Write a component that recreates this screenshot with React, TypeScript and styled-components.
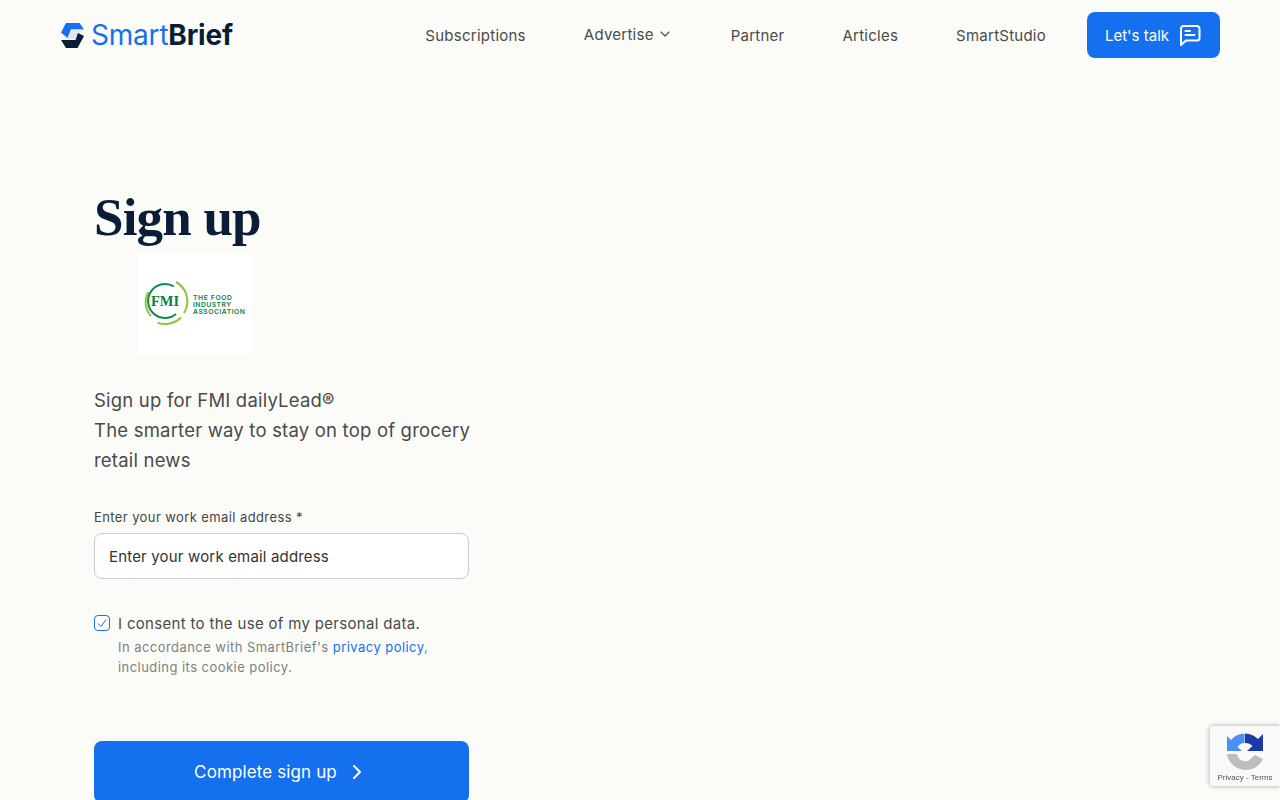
import styled, { createGlobalStyle } from "styled-components";
import { ChevronDown, ChevronRight } from "lucide-react";

const GlobalStyle = createGlobalStyle`
  html, body {
    margin: 0;
    padding: 0;
    height: 800px;
    overflow: hidden;
    background: #fbfcf8;
    font-family: Inter, "Liberation Sans", sans-serif;
  }
  * { box-sizing: border-box; }
`;

const navItems = ["Subscriptions", "Advertise", "Partner", "Articles", "SmartStudio"];

const LogoMark = () => (
  <svg width="24" height="25" viewBox="0 0 24 25">
    <path d="M6 0H19.5L24 6.5H11L7.5 15L1 9.5Z" fill="#1570ef" />
    <path d="M11 6.5H22L16 16H7.5Z" fill="#e3e6ea" />
    <path d="M1 17H15.5L18 10L24 13L17.5 25H6Z" fill="#0a1d37" />
  </svg>
);

const TalkIcon = () => (
  <svg width="24" height="24" viewBox="0 0 24 24" fill="none" stroke="#fff" strokeWidth="2" strokeLinecap="round" strokeLinejoin="round">
    <path d="M5.5 3H19A2.5 2.5 0 0 1 21.5 5.5V15A2.5 2.5 0 0 1 19 17.5H8L3 22V5.5A2.5 2.5 0 0 1 5.5 3Z" />
    <path d="M7.5 8H12M7.5 12H16.5" />
  </svg>
);

const FmiLogo = () => (
  <svg width="114" height="100" viewBox="0 0 114 100">
    <path d="M36 33.5A17 17 0 1 0 38 61" fill="none" stroke="#0f8a4a" strokeWidth="2" />
    <path d="M10.5 39A20 20 0 0 0 13 63" fill="none" stroke="#8cc63f" strokeWidth="2" />
    <path d="M38 29A22 22 0 0 1 46 60" fill="none" stroke="#8cc63f" strokeWidth="2" />
    <path d="M19.5 69.7A23 23 0 0 0 43 64.5" fill="none" stroke="#8cc63f" strokeWidth="2" />
    <text x="27" y="53" textAnchor="middle" fontFamily="'Liberation Serif', serif" fontWeight="700" fontSize="14.5" fill="#0b7f43">FMI</text>
    <g fontFamily="Inter, sans-serif" fontWeight="600" fontSize="6.8" fill="#0b7f43">
      <text x="55" y="47" textLength="39">THE FOOD</text>
      <text x="55" y="54" textLength="38">INDUSTRY</text>
      <text x="55" y="61" textLength="52">ASSOCIATION</text>
    </g>
  </svg>
);

const RecaptchaIcon = () => (
  <svg width="36" height="40" viewBox="0 0 36 40">
    <path d="M17.5 0.5A19 19 0 0 0 4 7L0 3V18H15L10.5 14A9 9 0 0 1 17.5 10Z" fill="#4a90f5" />
    <path d="M18 0.5A19 19 0 0 1 31 6L36 1V18H20L25.5 13A9 9 0 0 0 18 10Z" fill="#1c3aa9" />
    <path d="M0 21H10A8 8 0 0 0 24 25.5L28 22L36 26A19 19 0 0 1 0 21Z" fill="#bdbdbd" />
  </svg>
);

export default function App() {
  return (
    <>
      <GlobalStyle />
      <Header>
        <Brand>
          <LogoMark />
          <Wordmark>
            Smart<strong>Brief</strong>
          </Wordmark>
        </Brand>
        <Nav>
          {navItems.map((item) => (
            <NavLink key={item} $raised={item === "Advertise"}>
              {item}
              {item === "Advertise" && <ChevronDown size={16} strokeWidth={1.6} />}
            </NavLink>
          ))}
          <TalkButton>
            Let's talk
            <TalkIcon />
          </TalkButton>
        </Nav>
      </Header>

      <Main>
        <Title>Sign up</Title>
        <LogoCard>
          <FmiLogo />
        </LogoCard>
        <Intro>
          Sign up for FMI dailyLead®
          <br />
          The smarter way to stay on top of grocery
          <br />
          retail news
        </Intro>
        <Label htmlFor="email">Enter your work email address *</Label>
        <EmailInput id="email" placeholder="Enter your work email address" />
        <Consent>
          <CheckBox>
            <svg width="10" height="10" viewBox="0 0 10 10" fill="none" stroke="#1570ef" strokeWidth="1">
              <path d="M1 5.5L4 8.5L9 1.5" />
            </svg>
          </CheckBox>
          <ConsentText>
            <ConsentTitle>I consent to the use of my personal data.</ConsentTitle>
            <ConsentNote>
              In accordance with SmartBrief's <a href="#privacy">privacy policy</a>,
              <br />
              including its cookie policy.
            </ConsentNote>
          </ConsentText>
        </Consent>
        <SubmitButton>
          Complete sign up
          <ChevronRight size={24} strokeWidth={2} />
        </SubmitButton>
      </Main>

      <Recaptcha>
        <RecaptchaIcon />
        <RecaptchaLinks>Privacy - Terms</RecaptchaLinks>
      </Recaptcha>
    </>
  );
}

const Header = styled.header`
  height: 70px;
  padding: 12px 60px 0;
  display: flex;
  justify-content: space-between;
  align-items: flex-start;
`;

const Brand = styled.div`
  display: flex;
  align-items: center;
  gap: 7px;
  height: 46px;
`;

const Wordmark = styled.span`
  font-size: 28px;
  letter-spacing: -0.2px;
  color: #1570ef;
  font-weight: 400;

  strong {
    color: #0a1d37;
    font-weight: 700;
  }
`;

const Nav = styled.nav`
  display: flex;
  align-items: center;
  height: 46px;
`;

const NavLink = styled.a<{ $raised?: boolean }>`
  display: flex;
  align-items: center;
  gap: 3px;
  margin-right: 58px;
  font-size: 15px;
  letter-spacing: 0.25px;
  color: #4a4a4a;
  position: relative;
  top: ${({ $raised }) => ($raised ? "-1px" : "0")};

  &:nth-child(5) {
    margin-right: 41px;
  }
`;

const TalkButton = styled.button`
  width: 133px;
  height: 46px;
  display: flex;
  align-items: center;
  justify-content: center;
  gap: 9px;
  border: none;
  border-radius: 8px;
  background: #1570ef;
  color: #fff;
  font-family: inherit;
  font-size: 15px;
`;

const Main = styled.main`
  width: 375px;
  margin-left: 94px;
  padding-top: 117px;
`;

const Title = styled.h1`
  margin: 0;
  height: 66px;
  line-height: 60px;
  font-family: "Liberation Serif", serif;
  font-size: 53px;
  font-weight: 700;
  letter-spacing: -0.8px;
  color: #0a1d37;
`;

const LogoCard = styled.div`
  width: 114px;
  height: 100px;
  margin-left: 44px;
  background: #fff;
`;

const Intro = styled.p`
  margin: 32px 0 0;
  font-size: 18.5px;
  letter-spacing: 0.2px;
  line-height: 30px;
  white-space: nowrap;
  color: #4a4a4a;
`;

const Label = styled.label`
  display: block;
  margin-top: 34px;
  font-size: 13px;
  letter-spacing: 0.4px;
  line-height: 16px;
  color: #444;
`;

const EmailInput = styled.input`
  display: block;
  width: 100%;
  height: 46px;
  margin-top: 8px;
  padding: 0 14px;
  background: #fff;
  border: 1px solid #c8cad0;
  border-radius: 8px;
  font-family: inherit;
  font-size: 15px;
  letter-spacing: 0.17px;
  outline: none;

  &::placeholder {
    color: #333;
    opacity: 1;
  }
`;

const Consent = styled.div`
  display: flex;
  gap: 8px;
  margin-top: 35px;
`;

const CheckBox = styled.span`
  flex: none;
  width: 16px;
  height: 16px;
  margin-top: 1px;
  display: flex;
  align-items: center;
  justify-content: center;
  background: #fff;
  border: 1px solid #1570ef;
  border-radius: 4px;
`;

const ConsentText = styled.div`
  display: flex;
  flex-direction: column;
`;

const ConsentTitle = styled.span`
  font-size: 15px;
  letter-spacing: 0.32px;
  line-height: 20px;
  color: #4a4a4a;
`;

const ConsentNote = styled.span`
  margin-top: 3px;
  font-size: 13px;
  letter-spacing: 0.45px;
  line-height: 20px;
  color: #808080;

  a {
    color: #1570ef;
    text-decoration: none;
  }
`;

const SubmitButton = styled.button`
  width: 100%;
  height: 62px;
  margin-top: 64px;
  display: flex;
  align-items: center;
  justify-content: center;
  gap: 8px;
  border: none;
  border-radius: 8px;
  background: #1570ef;
  color: #fff;
  font-family: inherit;
  font-size: 17px;
  letter-spacing: 0.12px;
`;

const Recaptcha = styled.div`
  position: fixed;
  right: 0;
  bottom: 14px;
  width: 70px;
  height: 60px;
  padding: 7px 0 0;
  display: flex;
  flex-direction: column;
  align-items: center;
  background: #f9f9f9;
  border-radius: 2px 0 0 2px;
  box-shadow: 0 0 5px rgba(0, 0, 0, 0.35);
`;

const RecaptchaLinks = styled.span`
  font-family: "Liberation Sans", sans-serif;
  font-size: 8px;
  line-height: 10px;
  color: #555;
`;
